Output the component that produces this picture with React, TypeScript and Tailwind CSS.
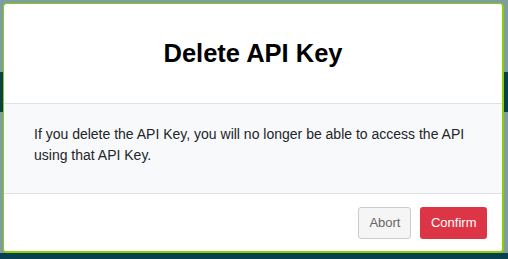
import React from 'react';

export default function App() {
  return (
    <div className="relative h-[259px] w-[508px] overflow-hidden bg-[#7f9ba4] font-['Liberation_Sans',Arial,sans-serif]">
      {/* page behind the overlay */}
      <div className="absolute left-0 right-0 top-[72px] h-[40px] bg-[#08404f]" />
      <div className="absolute bottom-0 left-0 right-0 h-[6px] bg-[#08404f]" />

      {/* modal */}
      <div className="absolute left-[3px] top-[3px] flex h-[250px] w-[501px] flex-col overflow-hidden rounded-[4px] border border-[#8ccf00] border-b-2 border-r-2 bg-white">
        <div className="flex h-[100px] items-center justify-center border-b border-[#dee2e6]">
          <h1 className="text-[25.5px] font-bold text-black">Delete API Key</h1>
        </div>
        <div className="h-[90px] border-b border-[#dee2e6] bg-[#f8f9fa] pl-[30px] pr-[20px] pt-[20px]">
          <p className="text-[14px] leading-[21px] text-[#212529]">
            If you delete the API Key, you will no longer be able to access the API using that API Key.
          </p>
        </div>
        <div className="flex flex-1 items-center justify-end gap-[9px] pr-[15px]">
          <button className="h-[32px] rounded-[3px] border border-[#ccc] bg-[#f5f5f5] px-[10px] text-[13px] text-[#666]">
            Abort
          </button>
          <button className="h-[32px] rounded-[3px] bg-[#dc3545] px-[10.5px] text-[13px] text-white">
            Confirm
          </button>
        </div>
      </div>
    </div>
  );
}
